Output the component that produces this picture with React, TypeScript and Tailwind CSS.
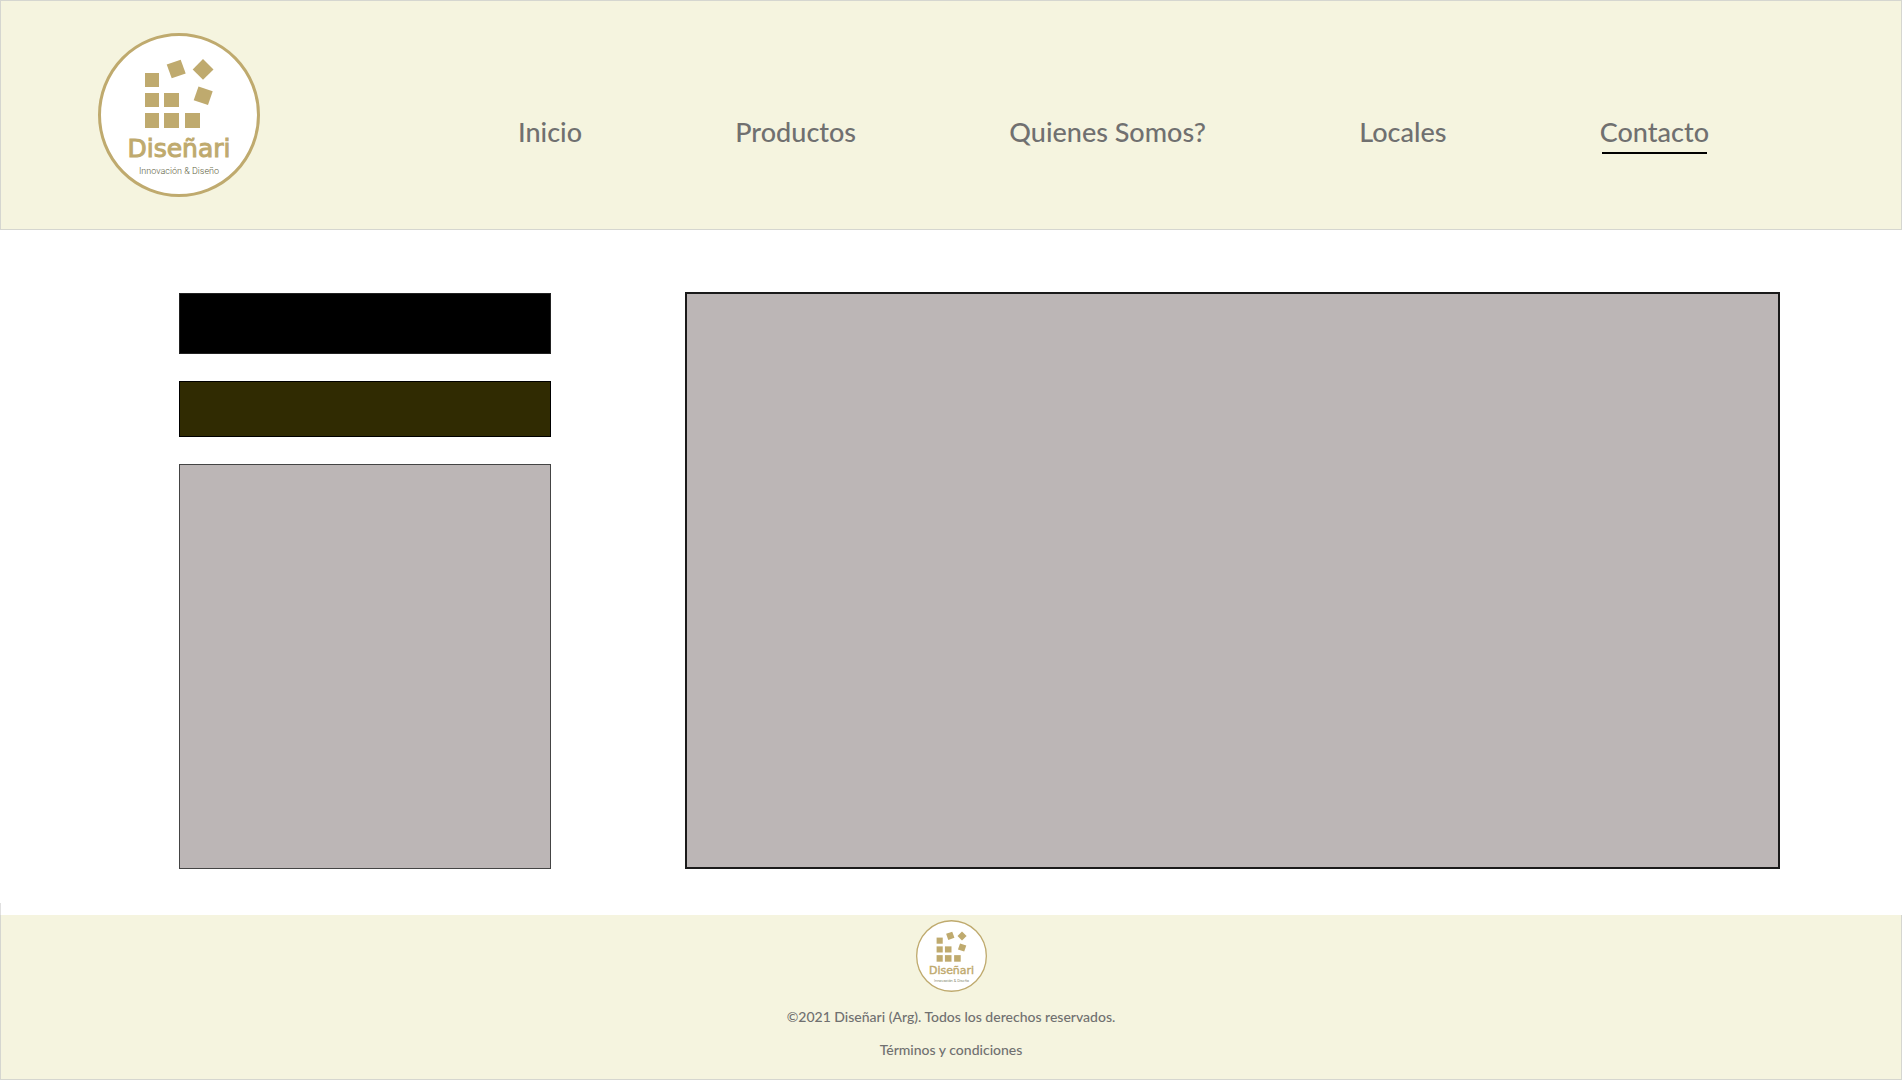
const navItems = [
  { label: "Inicio", active: false },
  { label: "Productos", active: false },
  { label: "Quienes Somos?", active: false },
  { label: "Locales", active: false },
  { label: "Contacto", active: true },
];

function Logo({ className }: { className: string }) {
  return (
    <svg viewBox="0 0 162 164" className={className} role="img" aria-label="Diseñari, Innovación & Diseño">
      <ellipse cx="81" cy="82" rx="79.5" ry="80.5" fill="#ffffff" stroke="#bfaa6e" strokeWidth="3" />
      <g fill="#bfaa6e">
        <rect x="47" y="40" width="14" height="14" />
        <rect x="47" y="60" width="14" height="14" />
        <rect x="66" y="60" width="15" height="14" />
        <rect x="47" y="80" width="14" height="15" />
        <rect x="66" y="80" width="15" height="15" />
        <rect x="87" y="80" width="15" height="15" />
        <path d="M68.700 31.500 L82.700 26.800 L87.700 40.500 L73.700 45.300 Z" />
        <path d="M94.700 36.500 L105 26 L115.500 36.500 L105 46.700 Z" />
        <path d="M100.500 53.500 L114.700 58.200 L110 72 L95.700 67.300 Z" />
      </g>
      <text
        x="81"
        y="124"
        textAnchor="middle"
        fill="#bfaa6e"
        stroke="#bfaa6e"
        strokeWidth="1"
        className="font-['DejaVu_Sans',sans-serif] text-[25px]"
      >
        Diseñari
      </text>
      <text x="81" y="141" textAnchor="middle" fill="#5c6040" className="font-[Roboto,sans-serif] text-[9px] font-light">
        Innovación &amp; Diseño
      </text>
    </svg>
  );
}

export default function App() {
  return (
    <div className="flex min-h-screen flex-col bg-white font-[Lato,sans-serif] text-[#707070]">
      <header className="flex items-start border border-[#d5d6d0] bg-[#f5f4df] pt-8 pr-48 pb-8 pl-[97px]">
        <Logo className="h-[164px] w-[162px] shrink-0" />
        <nav className="flex flex-1 items-start justify-between pt-20 pl-[258px] text-[27px] leading-[38px] font-medium">
          {navItems.map((item) => (
            <a
              key={item.label}
              href="#"
              aria-current={item.active ? "page" : undefined}
              className="flex flex-col"
            >
              {item.label}
              {item.active && <span className="mx-0.5 mt-px h-0.5 bg-black" />}
            </a>
          ))}
        </nav>
      </header>

      <main className="grid flex-1 grid-cols-[372fr_1095fr] gap-x-[134px] pt-[62px] pr-[122px] pb-[34px] pl-[179px]">
        <div className="flex flex-col gap-[27px] pt-px">
          <div className="h-[61px] border border-[#222222] bg-black" />
          <div className="h-14 border border-black bg-[#302b02]" />
          <div className="flex-1 border border-[#444444] bg-[#bcb6b6]" />
        </div>
        <div className="border-2 border-[#1a1a1a] bg-[#bcb6b6]" />
      </main>

      <footer>
        <div className="h-3 border-l border-[#e0e0e0]" />
        <div className="flex flex-col items-center border border-t-0 border-[#d5d6d0] bg-[#f5f4df] pt-[5px] pb-[13px] text-sm leading-[33px] font-medium">
          <Logo className="mb-2 h-[72px] w-[71px]" />
          <p>©2021 Diseñari (Arg). Todos los derechos reservados.</p>
          <a href="#">Términos y condiciones</a>
        </div>
      </footer>
    </div>
  );
}
